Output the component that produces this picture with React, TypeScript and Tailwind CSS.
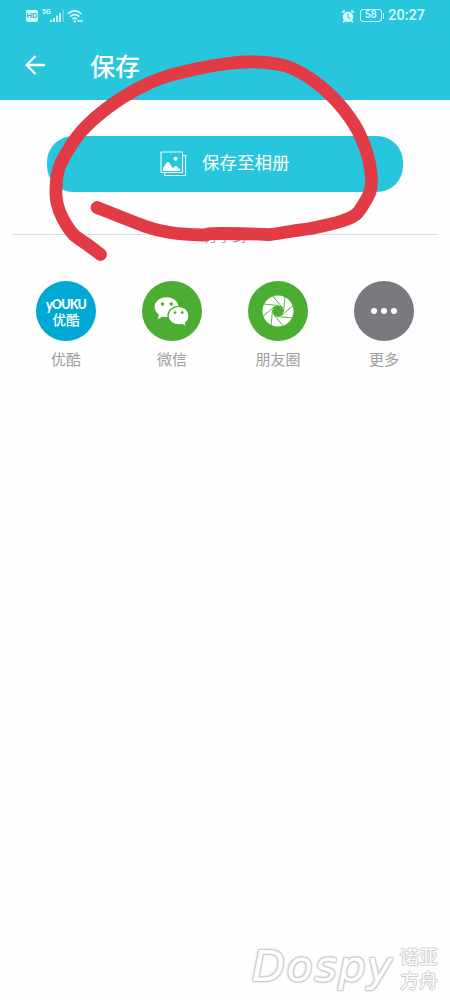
import type { ReactNode } from 'react';

const BLADES = Array.from({ length: 8 }, (_, i) => i * 45);

// centre line of the marker stroke, from the outer tail round to the inner one
const MARKER: [number, number][] = [
  [100.5, 254.5],
  [88, 245],
  [74, 235],
  [63, 219],
  [57, 203],
  [56, 187],
  [59, 168],
  [70, 147],
  [85, 127.5],
  [110, 106],
  [137, 89],
  [163, 77.5],
  [196, 69],
  [228, 63.5],
  [255, 61.8],
  [286, 66],
  [311, 79],
  [334, 98.5],
  [354, 124],
  [366, 150],
  [371, 173],
  [370, 192],
  [357, 213.5],
  [342, 221],
  [313, 228],
  [293, 231],
  [270, 234.5],
  [250, 233.8],
  [212, 233.6],
  [202, 235],
  [170, 232.5],
  [147, 227],
  [97, 207.5],
];

// Catmull-Rom spline through the points, written as cubic beziers
function smoothPath(pts: [number, number][]) {
  let d = `M${pts[0][0]} ${pts[0][1]}`;
  for (let i = 0; i < pts.length - 1; i++) {
    const a = pts[i - 1] ?? pts[i];
    const b = pts[i];
    const c = pts[i + 1];
    const e = pts[i + 2] ?? c;
    d += `C${b[0] + (c[0] - a[0]) / 8} ${b[1] + (c[1] - a[1]) / 8} ${c[0] - (e[0] - b[0]) / 8} ${c[1] - (e[1] - b[1]) / 8} ${c[0]} ${c[1]}`;
  }
  return d;
}

function StatusBar() {
  return (
    <div className="flex h-[31px] items-center justify-between pl-[26px] pr-[25px] text-[#d5fbff]">
      <div className="flex items-center">
        <span className="flex h-3 w-3 items-center justify-center rounded-[2px] bg-[#d5fbff] text-[7.5px] font-bold leading-none text-[#28b4cb]">
          HD
        </span>
        <span className="mb-[7px] ml-1 font-[Roboto] text-[7px] font-bold leading-none">5G</span>
        <svg className="-ml-px h-[14px] w-[15px]" viewBox="0 0 15 14">
          <path d="M1 11v2M4 9v4M7 6.500V13M10 4v9" stroke="currentColor" strokeWidth="1.8" />
          <path d="M13.300 1v12" stroke="currentColor" strokeWidth="1.2" opacity=".45" />
        </svg>
        <svg className="ml-[2px] h-[14px] w-[17px]" viewBox="0 0 17 14" fill="none" stroke="currentColor">
          <path d="M.7 5Q7.700-1.500 14.700 5M3 7.700q4.700-4.200 9.400 0M5.400 10.200q2.300-2 4.600 0" strokeWidth="1.7" />
          <circle cx="7.7" cy="12.4" r="1.2" fill="currentColor" stroke="none" />
          <path d="M10.500 12h5" strokeWidth="2" strokeDasharray="2.2 .6" />
        </svg>
      </div>
      <div className="flex items-center">
        <svg className="h-[14px] w-[14px]" viewBox="0 0 14 14">
          <circle cx="7" cy="7.8" r="5.3" fill="currentColor" />
          <path d="M1 3.700 3.700 1.300M10.300 1.300 13 3.700M3.600 11.600l-1.400 1.600M10.400 11.600l1.400 1.600" stroke="currentColor" strokeWidth="1.7" />
          <path d="M7 4.600V8l2.200 1.500" fill="none" stroke="#28c6dc" strokeWidth="1.1" />
        </svg>
        <span className="ml-[5px] flex h-[13px] w-[22px] items-center justify-center rounded-[3px] border border-[#d5fbff] font-[Roboto] text-[10.5px] font-medium leading-none">
          58
        </span>
        <span className="ml-px h-[6px] w-[1.5px] bg-[#d5fbff]" />
        <span className="ml-[4px] mt-[2px] font-[Roboto] text-[14.5px] font-medium leading-none">20:27</span>
      </div>
    </div>
  );
}

function GalleryIcon() {
  return (
    <svg className="h-[26px] w-[27px]" viewBox="0 0 27 26" fill="none" stroke="#e3fdff" strokeWidth="1.1">
      <rect x="1" y="1" width="21.5" height="20.5" rx=".6" />
      <path d="M23 4.500h2.600v20H4.800V22" />
      <path d="M3 20v-3.500c2-1 3-5.500 5-5.500s3 4.500 4.800 6c1.200-.5 1.700-2.200 3-2.200 1.500 0 2.200 3 4.700 3.700V20Z" fill="#fff" stroke="none" />
      <circle cx="15.6" cy="7.8" r="2" fill="#fff" stroke="none" />
    </svg>
  );
}

function WechatIcon() {
  return (
    <svg className="h-[60px] w-[60px]" viewBox="0 0 60 60">
      <path
        d="M24.500 16.300C17.800 16.300 12.600 20.600 12.600 26c0 3.100 1.700 5.800 4.300 7.600l-1.100 4.700 5-2.800q1.800.5 3.700.5c6.600 0 11.900-4.400 11.900-10s-5.300-9.700-11.900-9.700Z"
        fill="#fff"
      />
      <path
        d="M36.700 25.400c-6 0-10.700 4.100-10.700 9.300s4.700 9.300 10.700 9.300q1.800 0 3.400-.4l4.300 2.400-1-4c2.200-1.700 3.600-4.300 3.600-7.300 0-5.200-4.500-9.300-10.300-9.300Z"
        fill="#fff"
        stroke="#4bae32"
        strokeWidth="1.3"
      />
      <g fill="#4bae32">
        <circle cx="20.5" cy="23" r="1.7" />
        <circle cx="29.3" cy="23" r="1.7" />
        <circle cx="33" cy="31.6" r="1.4" />
        <circle cx="40.2" cy="31.6" r="1.4" />
      </g>
    </svg>
  );
}

function MomentsIcon() {
  return (
    <svg className="h-[60px] w-[60px]" viewBox="-30 -30 60 60">
      <circle r="15.5" fill="#fff" />
      <circle r="5.5" fill="#4bae32" />
      {BLADES.map((deg) => (
        <path key={deg} d="M1-5.500-15-7" transform={`rotate(${deg})`} stroke="#4bae32" strokeWidth=".9" />
      ))}
    </svg>
  );
}

function ShareItem({ label, color, children }: { label: string; color: string; children: ReactNode }) {
  return (
    <div className="flex w-[60px] flex-col items-center">
      <div className={`flex h-[60px] w-[60px] flex-col items-center justify-center rounded-full ${color}`}>{children}</div>
      <span className="mt-2 whitespace-nowrap text-[15px] leading-[22px] text-[#9f9f9f]">{label}</span>
    </div>
  );
}

export default function App() {
  return (
    <div className="relative h-[1000px] w-[450px] overflow-hidden bg-[#fefefe] font-['Liberation_Sans','Noto_Sans_CJK_SC',sans-serif]">
      <header className="h-[100px] bg-[#28c6dc]">
        <StatusBar />
        <div className="flex h-[68px] items-center pl-[25px] text-white">
          <svg className="h-5 w-5" viewBox="0 0 20 20" fill="none" stroke="currentColor" strokeWidth="2.3">
            <path d="M20 10H2M10.500 1 1.600 10l8.900 9" />
          </svg>
          <h1 className="ml-[45px] mt-[5px] text-[25px] font-medium leading-none">保存</h1>
        </div>
      </header>

      <main>
        <button className="mx-auto mt-9 flex h-14 w-[356px] items-center rounded-[26px] bg-[#28c6dc] pl-[113px] text-white">
          <GalleryIcon />
          <span className="ml-[15px] text-[17.5px] leading-none">保存至相册</span>
        </button>

        <div className="mx-3 mt-[30px] flex h-6 items-center text-[14px] leading-none text-[#999]">
          <span className="h-px flex-1 bg-[#dcdcdc]" />
          <span className="mt-1">分享到</span>
          <span className="h-px flex-1 bg-[#dcdcdc]" />
        </div>

        <div className="mt-[35px] flex justify-between px-9">
          <ShareItem label="优酷" color="bg-[#00a9d3]">
            <span className="mt-1 font-[Lato] text-[12.5px] font-black leading-[14px] tracking-[-0.8px] text-white">
              <span className="inline-block scale-y-[1.25]">y</span>OUKU
            </span>
            <span className="mt-px text-[13.5px] font-medium leading-[15px] text-white">优酷</span>
          </ShareItem>
          <ShareItem label="微信" color="bg-[#4bae32]">
            <WechatIcon />
          </ShareItem>
          <ShareItem label="朋友圈" color="bg-[#4bae32]">
            <MomentsIcon />
          </ShareItem>
          <ShareItem label="更多" color="bg-[#797980]">
            <div className="flex gap-1">
              <span className="h-1.5 w-1.5 rounded-full bg-white" />
              <span className="h-1.5 w-1.5 rounded-full bg-white" />
              <span className="h-1.5 w-1.5 rounded-full bg-white" />
            </div>
          </ShareItem>
        </div>
      </main>

      {/* hand-drawn marker around the save button */}
      <svg className="pointer-events-none absolute inset-0 h-[1000px] w-[450px]" viewBox="0 0 450 1000">
        <path
          d={smoothPath(MARKER)}
          fill="none"
          stroke="#e23b46"
          strokeWidth="12.8"
          strokeLinecap="round"
          strokeLinejoin="round"
        />
      </svg>

      <div className="absolute bottom-0 left-[252px] flex h-[60px] items-center text-white">
        <span className="w-[148px] pb-2 font-['DejaVu_Sans'] text-[43px] italic leading-none tracking-[1.5px] [text-shadow:1px_1px_1px_#ccc,-1px_-1px_1px_#ccc,1px_-1px_1px_#ccc,-1px_1px_1px_#ccc,0_0_3px_#c8c8c8]">
          Dospy
        </span>
        <span className="w-[40px] text-[19px] leading-[24px] [text-shadow:1px_0_0_#ccc,-1px_0_0_#ccc,0_1px_0_#ccc,0_-1px_0_#ccc]">
          诺亚
          <br />
          方舟
        </span>
      </div>
    </div>
  );
}
